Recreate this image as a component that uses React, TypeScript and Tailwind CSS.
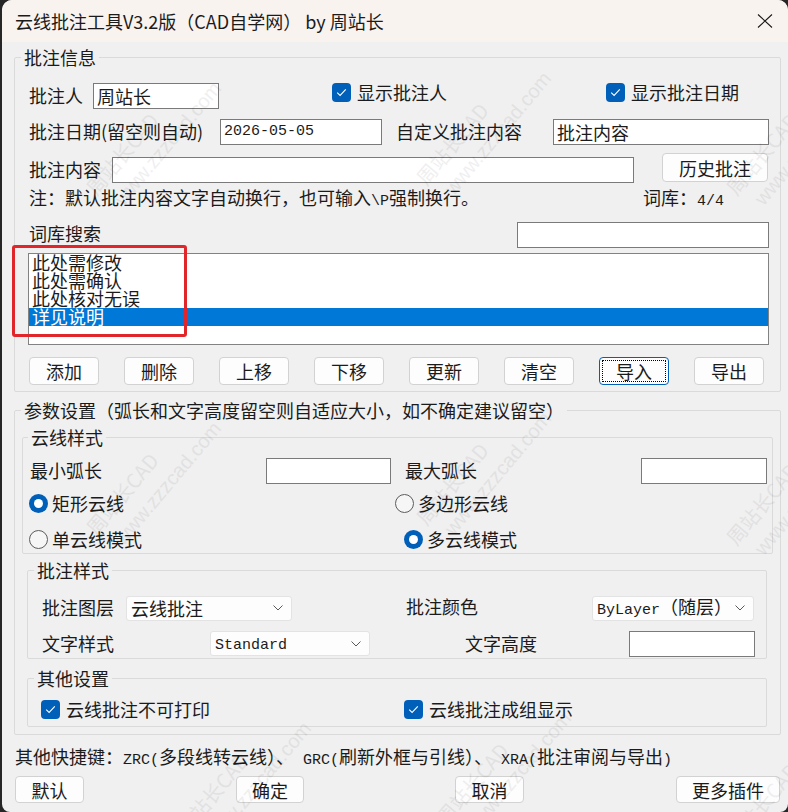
import React from "react";

// Latin runs in the dialog use a half-width monospace face
function Mono({ children }: { children: React.ReactNode }) {
  return (
    <span className="font-['Liberation_Mono',monospace] text-[15px] whitespace-pre">
      {children}
    </span>
  );
}

function TextBox({
  className,
  children,
}: {
  className: string;
  children?: React.ReactNode;
}) {
  return (
    <div
      className={`${className} h-[26px] bg-white border border-[#7a7a7a] pl-[3px] flex items-center leading-[20px] whitespace-nowrap overflow-hidden`}
    >
      {children}
    </div>
  );
}

function Check({ text }: { text: string }) {
  return (
    <div className="flex items-center gap-[6px] leading-[20px]">
      <span className="w-[19px] h-[19px] rounded-[4px] bg-[#005fb8] flex items-center justify-center">
        <svg width="11" height="9" viewBox="0 0 11 9">
          <path
            d="M1.2 4.6 L4.1 7.4 L9.8 1.4"
            stroke="white"
            strokeWidth="1.1"
            fill="none"
          />
        </svg>
      </span>
      <span className="whitespace-nowrap">{text}</span>
    </div>
  );
}

function Radio({ text, checked }: { text: string; checked?: boolean }) {
  return (
    <div className="flex items-center gap-[4px] leading-[20px]">
      {checked ? (
        <span className="w-[19px] h-[19px] rounded-full bg-[#005fb8] flex items-center justify-center">
          <span className="w-[9px] h-[9px] rounded-full bg-white" />
        </span>
      ) : (
        <span className="w-[19px] h-[19px] rounded-full border border-[#5c5c5c] bg-[#f6f6f6]" />
      )}
      <span className="whitespace-nowrap">{text}</span>
    </div>
  );
}

function Btn({
  className,
  children,
  focused,
}: {
  className: string;
  children: React.ReactNode;
  focused?: boolean;
}) {
  return (
    <button
      className={`${className} bg-[#fdfdfd] border rounded-[4px] flex items-center justify-center leading-[20px] ${
        focused
          ? "border-[#005fb8] outline-1 outline-dotted outline-black outline-offset-[-4px]"
          : "border-[#d2d2d2]"
      }`}
    >
      {children}
    </button>
  );
}

function Select({
  className,
  children,
}: {
  className: string;
  children: React.ReactNode;
}) {
  return (
    <div
      className={`${className} h-[25px] bg-[#fdfdfd] border border-[#e3e3e3] rounded-[3px] flex items-center justify-between pl-[4px] pr-[8px] leading-[20px] whitespace-nowrap`}
    >
      <span>{children}</span>
      <svg width="10" height="6" viewBox="0 0 10 6">
        <path d="M0.5 0.5 L5 5 L9.5 0.5" stroke="#5a5a5a" fill="none" />
      </svg>
    </div>
  );
}

function Watermark({ className }: { className: string }) {
  return (
    <div
      className={`${className} absolute pointer-events-none -rotate-[50deg] text-[#000] opacity-[0.06] text-[20px] leading-[28px] whitespace-nowrap select-none`}
    >
      <div>周站长CAD</div>
      <div className="font-['Liberation_Sans',sans-serif] pl-[10px]">www.zzzcad.com</div>
    </div>
  );
}

const words = ["此处需修改", "此处需确认", "此处核对无误", "详见说明"];

export default function App() {
  return (
    <div className="w-[788px] h-[812px] bg-[#262626] pl-[2px] overflow-hidden font-['Noto_Sans_CJK_SC',sans-serif] text-[#1b1b1b]">
      <div className="relative w-[786px] h-[812px] rounded-t-[10px] rounded-b-[8px] bg-[#f0f0f0] overflow-hidden">
        {/* title bar */}
        <div className="h-[42px] bg-[#f9f3f0] flex items-center justify-between pl-[13px] pr-[15px]">
          <span className="text-[18px] leading-[24px] whitespace-nowrap">
            云线批注工具V3.2版（CAD自学网） by 周站长
          </span>
          <svg width="16" height="14" viewBox="0 0 16 14">
            <path d="M1 0.5 L15 13.5 M15 0.5 L1 13.5" stroke="#1a1a1a" strokeWidth="1.1" />
          </svg>
        </div>

        <div className="text-[18px]">
          {/* 批注信息 */}
          <fieldset className="mt-[5px] ml-[12px] w-[767px] border border-[#dadada] rounded-[2px] pb-[6px]">
            <legend className="ml-[6px] px-[3px] leading-[20px]">批注信息</legend>

            <div className="mt-[15px] h-[27px] flex items-center pl-[14px]">
              <div className="w-[64px] leading-[20px] -mt-[2px]">批注人</div>
              <div className="w-[239px]">
                <TextBox className="w-[126px]">周站长</TextBox>
              </div>
              <div className="w-[274px] self-start">
                <Check text="显示批注人" />
              </div>
              <div className="self-start">
                <Check text="显示批注日期" />
              </div>
            </div>

            <div className="mt-[9px] h-[28px] flex items-center pl-[14px]">
              <div className="w-[191px] whitespace-nowrap leading-[20px] -mt-[2px]">批注日期(留空则自动)</div>
              <div className="w-[176px]">
                <TextBox className="w-[162px]">
                  <Mono>2026-05-05</Mono>
                </TextBox>
              </div>
              <div className="w-[157px] whitespace-nowrap leading-[20px] -mt-[2px]">自定义批注内容</div>
              <TextBox className="w-[216px]">批注内容</TextBox>
            </div>

            <div className="mt-[7px] h-[31px] flex items-start pl-[14px]">
              <div className="w-[83px] mt-[6px] leading-[20px]">批注内容</div>
              <div className="w-[550px] mt-[4px]">
                <TextBox className="w-[522px]" />
              </div>
              <Btn className="w-[106px] h-[29px]">历史批注</Btn>
            </div>

            <div className="mt-[5px] h-[20px] flex items-center pl-[14px] leading-[20px]">
              <div className="w-[614px] whitespace-nowrap">
                注：默认批注内容文字自动换行，也可输入<Mono>\P</Mono>强制换行。
              </div>
              <div className="whitespace-nowrap">
                词库：<Mono>4/4</Mono>
              </div>
            </div>

            <div className="mt-[13px] h-[26px] flex items-center pl-[14px]">
              <div className="w-[488px] leading-[20px] -mt-[5px]">词库搜索</div>
              <TextBox className="w-[252px]" />
            </div>

            <div className="mt-[5px] ml-[13px] w-[741px] h-[92px] border border-[#828282] bg-white">
              {words.map((w, i) => (
                <div
                  key={w}
                  className={`h-[18px] leading-[17px] pl-[3px] whitespace-nowrap ${
                    i === 3 ? "bg-[#0078d7] text-white" : ""
                  }`}
                >
                  {w}
                </div>
              ))}
            </div>

            <div className="mt-[12px] h-[28px] flex pl-[14px] gap-[25px]">
              <Btn className="w-[70px] h-[28px]">添加</Btn>
              <Btn className="w-[70px] h-[28px]">删除</Btn>
              <Btn className="w-[70px] h-[28px]">上移</Btn>
              <Btn className="w-[70px] h-[28px]">下移</Btn>
              <Btn className="w-[70px] h-[28px]">更新</Btn>
              <Btn className="w-[70px] h-[28px]">清空</Btn>
              <Btn className="w-[70px] h-[28px]" focused>
                导入
              </Btn>
              <Btn className="w-[70px] h-[28px]">导出</Btn>
            </div>
          </fieldset>

          {/* 参数设置 */}
          <fieldset className="mt-[8px] ml-[12px] w-[767px] border border-[#dadada] rounded-[2px] pb-[7px]">
            <legend className="ml-[6px] px-[3px] leading-[20px] whitespace-nowrap">
              参数设置（弧长和文字高度留空则自适应大小，如不确定建议留空）
            </legend>

            <fieldset className="mt-[7px] ml-[7px] w-[751px] border border-[#dadada] rounded-[2px] pb-[3px]">
              <legend className="ml-[5px] px-[3px] leading-[20px]">云线样式</legend>
              <div className="mt-[11px] h-[26px] flex items-center pl-[7px]">
                <div className="w-[236px] leading-[20px] -mt-[2px]">最小弧长</div>
                <div className="w-[139px]">
                  <TextBox className="w-[125px]" />
                </div>
                <div className="w-[236px] leading-[20px] -mt-[2px]">最大弧长</div>
                <TextBox className="w-[126px]" />
              </div>
              <div className="mt-[9px] h-[20px] flex items-center pl-[6px]">
                <div className="w-[366px]">
                  <Radio text="矩形云线" checked />
                </div>
                <Radio text="多边形云线" />
              </div>
              <div className="mt-[16px] h-[20px] flex items-center pl-[6px]">
                <div className="w-[375px]">
                  <Radio text="单云线模式" />
                </div>
                <Radio text="多云线模式" checked />
              </div>
              <div className="h-[1px]" />
            </fieldset>

            <fieldset className="mt-[6px] ml-[12px] w-[740px] border border-[#dadada] rounded-[2px] pb-[1px]">
              <legend className="ml-[6px] px-[3px] leading-[20px]">批注样式</legend>
              <div className="mt-[15px] h-[26px] flex items-center pl-[14px]">
                <div className="w-[84px] leading-[20px] -mt-[2px]">批注图层</div>
                <div className="w-[280px]">
                  <Select className="w-[166px]">云线批注</Select>
                </div>
                <div className="w-[186px] leading-[20px] -mt-[4px]">批注颜色</div>
                <Select className="w-[162px]">
                  <Mono>ByLayer</Mono>（随层）
                </Select>
              </div>
              <div className="mt-[9px] h-[27px] flex items-center pl-[14px]">
                <div className="w-[168px] leading-[20px] -mt-[2px]">文字样式</div>
                <div className="w-[255px]">
                  <Select className="w-[160px]">
                    <Mono>Standard</Mono>
                  </Select>
                </div>
                <div className="w-[164px] leading-[20px] -mt-[2px]">文字高度</div>
                <TextBox className="w-[126px]" />
              </div>
            </fieldset>

            <fieldset className="mt-[9px] ml-[12px] w-[740px] border border-[#dadada] rounded-[2px] pb-[7px]">
              <legend className="ml-[6px] px-[3px] leading-[20px]">其他设置</legend>
              <div className="mt-[11px] h-[20px] flex items-center pl-[13px]">
                <div className="w-[363px]">
                  <Check text="云线批注不可打印" />
                </div>
                <Check text="云线批注成组显示" />
              </div>
            </fieldset>
          </fieldset>

          <div className="mt-[11px] h-[20px] leading-[20px] pl-[13px] whitespace-nowrap">
            其他快捷键：<Mono>ZRC(</Mono>多段线转云线）、<Mono> GRC(</Mono>刷新外框与引线）、
            <Mono> XRA(</Mono>批注审阅与导出<Mono>)</Mono>
          </div>

          <div className="mt-[10px] flex pl-[13px]">
            <div className="w-[221px]">
              <Btn className="w-[69px] h-[27px]">默认</Btn>
            </div>
            <div className="w-[219px]">
              <Btn className="w-[68px] h-[27px]">确定</Btn>
            </div>
            <div className="w-[221px]">
              <Btn className="w-[69px] h-[27px]">取消</Btn>
            </div>
            <Btn className="w-[104px] h-[27px]">更多插件</Btn>
          </div>
        </div>

        {/* red marker around the word list */}
        <div className="absolute left-[10px] top-[245px] w-[175px] h-[92px] border-[3px] border-[#e0262b] rounded-[3px] pointer-events-none" />

        {/* diagonal site watermark */}
        <Watermark className="left-[70px] top-[110px]" />
        <Watermark className="left-[400px] top-[100px]" />
        <Watermark className="left-[710px] top-[110px]" />
        <Watermark className="left-[70px] top-[450px]" />
        <Watermark className="left-[400px] top-[440px]" />
        <Watermark className="left-[710px] top-[460px]" />
        <Watermark className="left-[160px] top-[750px]" />
        <Watermark className="left-[420px] top-[740px]" />
        <Watermark className="left-[710px] top-[760px]" />
      </div>
    </div>
  );
}
